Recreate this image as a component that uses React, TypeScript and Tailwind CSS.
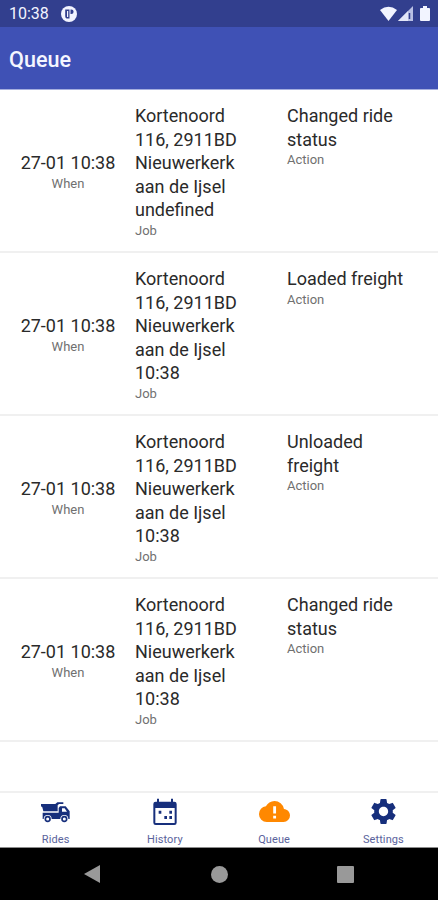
import { MdSettings } from 'react-icons/md';

const ADDRESS = ['Kortenoord', '116, 2911BD', 'Nieuwerkerk', 'aan de Ijsel'];

const QUEUE = [
  { id: 1, when: '27-01 10:38', job: [...ADDRESS, 'undefined'], action: ['Changed ride', 'status'] },
  { id: 2, when: '27-01 10:38', job: [...ADDRESS, '10:38'], action: ['Loaded freight'] },
  { id: 3, when: '27-01 10:38', job: [...ADDRESS, '10:38'], action: ['Unloaded', 'freight'] },
  { id: 4, when: '27-01 10:38', job: [...ADDRESS, '10:38'], action: ['Changed ride', 'status'] },
];

function TruckIcon() {
  return (
    <svg viewBox="0 0 96 72" className="w-8 h-6" fill="currentColor">
      <path d="M3 12h43l6-5h18v5H57l-4 4v18H10L7 22l-4-3z" />
      <path fillRule="evenodd" d="M60 19h17l12 15v23H8V38h48V24zM66 25v10h15l-7-10z" />
      <circle cx="23" cy="57" r="12" fill="#fff" />
      <circle cx="73" cy="57" r="12" fill="#fff" />
      <path fillRule="evenodd" d="M23 47.500a9.500 9.500 0 1 1 0 19a9.500 9.500 0 0 1 0-19zm0 5a4.500 4.500 0 1 0 0 9a4.500 4.500 0 0 0 0-9zM73 47.500a9.500 9.500 0 1 1 0 19a9.500 9.500 0 0 1 0-19zm0 5a4.500 4.500 0 1 0 0 9a4.500 4.500 0 0 0 0-9z" />
    </svg>
  );
}

function CalendarIcon() {
  return (
    <svg viewBox="0 0 78 84" className="w-[26px] h-7" fill="currentColor">
      <path
        fillRule="evenodd"
        d="M15 2h6v9h36V2h6v9h4q7 0 7 7v56q0 7-7 7H11q-7 0-7-7V18q0-7 7-7h4zM10 30v45h58V30z"
      />
      <path d="M20 38h8v9h-8zM52 38h8v9h-8zM37 54h8v9h-8zM52 54h8v9h-8z" />
    </svg>
  );
}

function CloudAlertIcon() {
  return (
    <svg viewBox="0 4 24 16" className="w-[31px] h-[21px]" preserveAspectRatio="none">
      <path
        fill="#ff8800"
        d="M19.350 10.030A7.490 7.490 0 0 0 12 4C9.110 4 6.600 5.640 5.350 8.030A6 6 0 0 0 0 14a6 6 0 0 0 6 6h13a5 5 0 0 0 5-5c0-2.640-2.050-4.780-4.650-4.970z"
      />
      <path fill="#fff" d="M11 8h2.200v5.600H11zM11 15.200h2.200v2.200H11z" />
    </svg>
  );
}

const TABS = [
  { label: 'Rides', icon: <TruckIcon /> },
  { label: 'History', icon: <CalendarIcon /> },
  { label: 'Queue', icon: <CloudAlertIcon /> },
  { label: 'Settings', icon: <MdSettings className="size-[31px]" /> },
];

function StatusBar() {
  return (
    <div className="flex h-[27px] shrink-0 items-center justify-between bg-[#323f8e] pl-[9px] pr-2 text-[#f2f4ff]">
      <div className="flex items-center gap-3 pt-px">
        <span className="text-base leading-5">10:38</span>
        <svg viewBox="0 0 16 16" className="size-4">
          <circle cx="8" cy="8" r="8" fill="currentColor" />
          <path
            d="M4.200 3.500h4.300v9H6.800A2.600 2.600 0 0 1 4.200 9.900zM9.500 3.500h.8a2.300 2.300 0 0 1 0 4.600h-.8z"
            fill="#323f8e"
          />
          <path d="M6 5h1.200v6H6z" fill="currentColor" />
        </svg>
      </div>
      <div className="flex items-center">
        <svg viewBox="0 0 18 15" className="h-[15px] w-[17px]" fill="currentColor" preserveAspectRatio="none">
          <path d="M0 4Q9-2.500 18 4L9 15z" />
        </svg>
        <svg viewBox="0 0 15 15" className="ml-px h-[15px] w-[15px]">
          <path d="M0 15L15 0v15z" fill="#b9c0e4" />
          <path d="M0 15L10 5v10z" fill="currentColor" fillOpacity=".75" />
          <path d="M11.500 7v6" stroke="#323f8e" strokeWidth="1.500" />
        </svg>
        <svg viewBox="0 0 10 16" className="ml-[7px] h-[15px] w-[10px]" fill="currentColor" preserveAspectRatio="none">
          <path d="M3 0h4v2h2q1 0 1 1v12q0 1-1 1H1q-1 0-1-1V3q0-1 1-1h2z" />
        </svg>
      </div>
    </div>
  );
}

function Cell({ lines, caption }: { lines: string[]; caption: string }) {
  return (
    <div>
      {lines.map((line) => (
        <p key={line} className="whitespace-nowrap text-[18px] leading-[23.5px] text-[#2a2a2a]">
          {line}
        </p>
      ))}
      <p className="text-[13px] leading-[18px] text-[#707070]">{caption}</p>
    </div>
  );
}

export default function App() {
  return (
    <div className="flex h-[900px] w-[438px] flex-col overflow-hidden bg-white font-['Roboto',sans-serif]">
      <StatusBar />
      <header className="flex h-[63px] shrink-0 items-center border-b border-[#a5aede] bg-[#3f51b5] px-[9px] pt-1">
        <h1 className="text-[21.6px] font-medium leading-7 text-[#f4f6ff]">Queue</h1>
      </header>

      {/* Queued actions */}
      <main className="flex-1">
        {QUEUE.map((item) => (
          <div
            key={item.id}
            className="grid h-[163px] grid-cols-[135px_152px_1fr] border-b-2 border-[#f0f0f0] pt-[14px]"
          >
            <div className="self-center pb-[13px] pl-px pt-[2px] text-center">
              <Cell lines={[item.when]} caption="When" />
            </div>
            <Cell lines={item.job} caption="Job" />
            <Cell lines={item.action} caption="Action" />
          </div>
        ))}
      </main>

      {/* Bottom tabs */}
      <nav className="grid h-[57px] shrink-0 grid-cols-4 border-b border-t-2 border-b-[#8c8c8c] border-t-[#f0f0f0] pl-px text-[#172f7c]">
        {TABS.map((tab) => (
          <div key={tab.label} className="flex flex-col items-center">
            <div className="flex h-[37px] items-center">{tab.icon}</div>
            <span className="mt-[3px] text-[11px] leading-[14px] tracking-[0.1px] text-[#5a639c]">{tab.label}</span>
          </div>
        ))}
      </nav>

      {/* System navigation */}
      <footer className="flex h-[52px] shrink-0 items-center justify-between bg-black pl-[84px] pr-[84px] text-[#999]">
        <svg viewBox="0 0 16 18" className="h-[18px] w-4" fill="currentColor">
          <path d="M0 9L16 0v18z" />
        </svg>
        <div className="ml-px size-[17px] rounded-full bg-[#999]" />
        <div className="size-[17px] rounded-[1px] bg-[#999]" />
      </footer>
    </div>
  );
}
